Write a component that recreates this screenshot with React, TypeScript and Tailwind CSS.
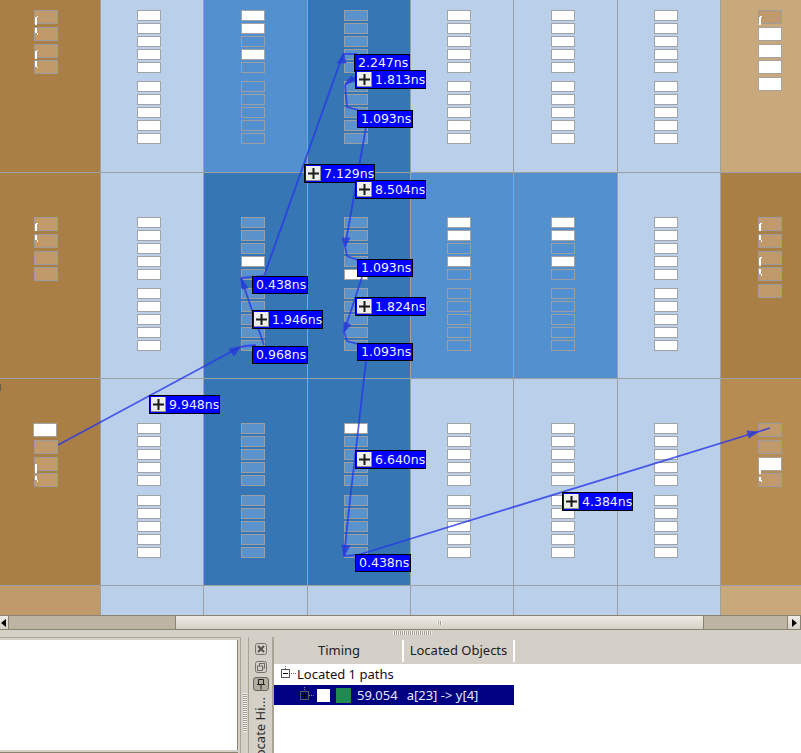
const FONT = "font-['DejaVu_Sans',sans-serif]";

type Tone = "light" | "mid" | "dark";
const toneBg: Record<Tone, string> = { light: "bg-[#bad0ea]", mid: "bg-[#5390cf]", dark: "bg-[#3676b5]" };
const emptyBox: Record<Tone, string> = { light: "bg-white", mid: "bg-[#5390cf]", dark: "bg-[#5a92cb]" };

function Box({ tone, on }: { tone: Tone; on: boolean }) {
  return <div className={`w-[24px] h-[11px] border ${on ? "bg-white border-[#a3a3a3]" : `${emptyBox[tone]} border-[#9c9ea2]`}`} />;
}

function Blue({ tone, top, left, on, gap }: { tone: Tone; top: string; left: string; on: string; gap: string }) {
  const a = on.slice(0, 5).split("");
  const b = on.slice(5).split("");
  return (
    <div className={`${toneBg[tone]} ${top} ${left}`}>
      <div className="flex flex-col gap-[2px]">
        {a.map((c, i) => <Box key={i} tone={tone} on={c === "1"} />)}
      </div>
      <div className={`flex flex-col gap-[2px] ${gap}`}>
        {b.map((c, i) => <Box key={i} tone={tone} on={c === "1"} />)}
      </div>
    </div>
  );
}

function Tile({ on, mt, shift }: { on?: boolean; mt?: string; shift?: string }) {
  return <div className={`w-[24px] h-[14px] border ${mt ?? ""} ${shift ?? ""} ${on ? "bg-white border-[#a3a3a3]" : "bg-[#c09a6b] border-[#9c9c9c]"}`} />;
}

function Brown({ bg, top, left, tiles }: { bg: string; top: string; left: string; tiles: { on?: boolean; shift?: string }[] }) {
  const mts = ["", "mt-[3px]", "mt-[3px]", "mt-[2px]", "mt-[3px]"];
  return (
    <div className={`${bg} ${top} ${left}`}>
      {tiles.map((t, i) => <Tile key={i} on={t.on} mt={mts[i]} shift={t.shift} />)}
    </div>
  );
}

function Row4({ bg }: { bg: string }) {
  return <div className={bg} />;
}

const labels = [
  { t: "2.247ns", p: "left-[354px] top-[54px]" },
  { t: "1.813ns", p: "left-[355px] top-[70px]", icon: true },
  { t: "1.093ns", p: "left-[357px] top-[110px]" },
  { t: "7.129ns", p: "left-[304px] top-[164px]", icon: true },
  { t: "8.504ns", p: "left-[355px] top-[180px]", icon: true },
  { t: "0.438ns", p: "left-[252px] top-[276px]" },
  { t: "1.946ns", p: "left-[252px] top-[310px]", icon: true },
  { t: "0.968ns", p: "left-[252px] top-[346px]" },
  { t: "1.093ns", p: "left-[357px] top-[259px]" },
  { t: "1.824ns", p: "left-[355px] top-[297px]", icon: true },
  { t: "1.093ns", p: "left-[357px] top-[343px]" },
  { t: "9.948ns", p: "left-[149px] top-[395px]", icon: true },
  { t: "6.640ns", p: "left-[355px] top-[450px]", icon: true },
  { t: "0.438ns", p: "left-[355px] top-[554px]" },
  { t: "4.384ns", p: "left-[562px] top-[492px]", icon: true },
];

function Label({ t, p, icon }: { t: string; p: string; icon?: boolean }) {
  return (
    <div className={`absolute ${p} ${icon ? "w-[71px] h-[19px]" : "w-[56px] h-[18px] pl-[3px]"} flex items-center border border-black bg-[#0000ff] text-[12.5px] leading-none text-[#f0f0ff] whitespace-nowrap ${FONT}`}>
      {icon && (
        <span className="w-[15px] h-[15px] ml-[1px] mr-[3px] shrink-0 flex items-center justify-center bg-[#eeeeea] border-r border-b border-[#8d8d8d]">
          <svg width="13" height="13" viewBox="0 0 13 13">
            <path d="M5.5 1h2v4.5H12v2H7.5V12h-2V7.5H1v-2h4.5z" fill="#1a1a1a" />
          </svg>
        </span>
      )}
      <span className="pt-[1px]">{t}</span>
    </div>
  );
}

function Overlay() {
  const lines = [
    "M58 445 L240 347",
    "M240 347 L246 346 L256 345",
    "M264 345 L241 278",
    "M241 278 L264 276 L343 54",
    "M343 54 L357 54",
    "M362 72 L345 85",
    "M345 85 L347 107 L358 110",
    "M366 127 L345 247",
    "M345 247 L347 256 L358 260",
    "M362 277 L344 332",
    "M344 332 L347 341 L358 344",
    "M366 361 L357 440 L350 500 L344 556",
    "M344 556 L358 555",
    "M358 555 L770 428",
  ];
  const heads = [
    "M240 347 L229 349 L234 356 Z",
    "M241 278 L248 288 L242 289 Z",
    "M344 54 L337 63 L346 63 Z",
    "M345 84 L351 76 L356 81 Z",
    "M342 238 L350 238 L345 247 Z",
    "M344 322 L351 325 L344 332 Z",
    "M342 545 L350 546 L344 556 Z",
    "M747 431 L758 432 L749 438 Z",
  ];
  const whites: [number, number, number, number][] = [
    [35, 17, 2, 8], [37, 16, 1, 1], [35, 28, 2, 5], [37, 33, 1, 2],
    [35, 51, 2, 8], [37, 50, 1, 1], [35, 61, 2, 6], [37, 67, 1, 1],
    [35, 224, 2, 7], [36, 223, 2, 1], [35, 235, 2, 5], [37, 240, 1, 2],
    [35, 464, 2, 9], [35, 476, 2, 4], [37, 480, 1, 2],
    [759, 17, 2, 8], [760, 16, 2, 1],
    [759, 224, 2, 7], [760, 223, 2, 1], [759, 235, 2, 5], [761, 240, 1, 2],
    [759, 258, 2, 8], [760, 257, 2, 1], [759, 269, 2, 5], [761, 274, 1, 2],
    [759, 470, 2, 4], [759, 477, 2, 4], [761, 480, 1, 2],
  ];
  return (
    <svg className="absolute left-0 top-0" width="801" height="615" viewBox="0 0 801 615">
      {whites.map(([x, y, w, h], i) => <rect key={i} x={x} y={y} width={w} height={h} fill="#ffffff" />)}
      <rect x="0" y="384" width="1" height="7" fill="#6a5d48" />
      {lines.map((d, i) => <path key={i} d={d} fill="none" stroke="#2536ea" strokeOpacity="0.78" strokeWidth="1.8" />)}
      {heads.map((d, i) => <path key={i} d={d} fill="#2536d8" fillOpacity="0.72" stroke="#2536ea" strokeOpacity="0.8" strokeWidth="0.8" />)}
    </svg>
  );
}

function ScrollButton({ dir }: { dir: "l" | "r" }) {
  return (
    <div className={`h-full flex items-center justify-center bg-gradient-to-b from-[#efece5] to-[#d5d1c7] ${dir === "l" ? "w-[9px] border-r border-[#8a8372]" : "w-[14px] border-x border-[#8a8372]"}`}>
      <svg width="6" height="8" viewBox="0 0 6 8">
        <path d={dir === "l" ? "M5 0v8L0 4z" : "M1 0v8l5-4z"} fill="#000" />
      </svg>
    </div>
  );
}

function Stripes({ n, vertical }: { n: number; vertical?: boolean }) {
  return (
    <div className={`flex bg-[#a09c92] ${vertical ? "flex-col gap-[1px]" : "gap-[1px]"}`}>
      {Array.from({ length: n }).map((_, i) => (
        <div key={i} className={vertical ? "w-[4px] h-[1px] bg-[#f4f3ee]" : "w-[1px] h-[4px] bg-[#f4f3ee]"} />
      ))}
    </div>
  );
}

export default function App() {
  const whiteAll = "1111111111";
  const t = { on: true };
  const e = {};
  return (
    <div className={`relative w-[801px] h-[753px] overflow-hidden flex flex-col bg-[#d4d0c8] ${FONT}`}>
      <div className="relative h-[615px] shrink-0">
        <div className="grid grid-cols-[100px_102px_103px_102px_102px_103px_102px_80px] grid-rows-[172px_205px_206px_29px] gap-px h-full bg-[#9da0a3]">
          <Brown bg="bg-[#a97f45]" top="pt-[10px]" left="pl-[34px]" tiles={[e, e, e, e]} />
          <Blue tone="light" top="pt-[10px]" left="pl-[36px]" on={whiteAll} gap="mt-[8px]" />
          <Blue tone="mid" top="pt-[10px]" left="pl-[37px]" on="1101000000" gap="mt-[8px]" />
          <Blue tone="dark" top="pt-[10px]" left="pl-[36px]" on="0000000000" gap="mt-[8px]" />
          <Blue tone="light" top="pt-[10px]" left="pl-[36px]" on={whiteAll} gap="mt-[8px]" />
          <Blue tone="light" top="pt-[10px]" left="pl-[37px]" on={whiteAll} gap="mt-[8px]" />
          <Blue tone="light" top="pt-[10px]" left="pl-[36px]" on={whiteAll} gap="mt-[8px]" />
          <Brown bg="bg-[#c9a87c]" top="pt-[10px]" left="pl-[37px]" tiles={[e, t, t, t, t]} />

          <Brown bg="bg-[#a97f45]" top="pt-[44px]" left="pl-[34px]" tiles={[e, e, e, e]} />
          <Blue tone="light" top="pt-[44px]" left="pl-[36px]" on={whiteAll} gap="mt-[8px]" />
          <Blue tone="dark" top="pt-[44px]" left="pl-[37px]" on="0001000000" gap="mt-[8px]" />
          <Blue tone="dark" top="pt-[44px]" left="pl-[36px]" on="0000100000" gap="mt-[8px]" />
          <Blue tone="mid" top="pt-[44px]" left="pl-[36px]" on="1101000000" gap="mt-[8px]" />
          <Blue tone="mid" top="pt-[44px]" left="pl-[37px]" on="1101000000" gap="mt-[8px]" />
          <Blue tone="light" top="pt-[44px]" left="pl-[36px]" on={whiteAll} gap="mt-[8px]" />
          <Brown bg="bg-[#a97f45]" top="pt-[44px]" left="pl-[37px]" tiles={[e, e, e, e, e]} />

          <Brown bg="bg-[#a97f45]" top="pt-[44px]" left="pl-[34px]" tiles={[{ on: true, shift: "-ml-[1px]" }, e, e, e]} />
          <Blue tone="light" top="pt-[44px]" left="pl-[36px]" on={whiteAll} gap="mt-[9px]" />
          <Blue tone="dark" top="pt-[44px]" left="pl-[37px]" on="0000000000" gap="mt-[9px]" />
          <Blue tone="dark" top="pt-[44px]" left="pl-[36px]" on="1000000000" gap="mt-[9px]" />
          <Blue tone="light" top="pt-[44px]" left="pl-[36px]" on={whiteAll} gap="mt-[9px]" />
          <Blue tone="light" top="pt-[44px]" left="pl-[37px]" on={whiteAll} gap="mt-[9px]" />
          <Blue tone="light" top="pt-[44px]" left="pl-[36px]" on={whiteAll} gap="mt-[9px]" />
          <Brown bg="bg-[#b78c52]" top="pt-[44px]" left="pl-[37px]" tiles={[e, e, t, e]} />

          <Row4 bg="bg-[#c09a6b]" />
          <Row4 bg="bg-[#bad0ea]" />
          <Row4 bg="bg-[#bad0ea]" />
          <Row4 bg="bg-[#bad0ea]" />
          <Row4 bg="bg-[#bad0ea]" />
          <Row4 bg="bg-[#bad0ea]" />
          <Row4 bg="bg-[#bad0ea]" />
          <Row4 bg="bg-[#c9a87c]" />
        </div>
        <Overlay />
        {labels.map((l, i) => <Label key={i} {...l} />)}
      </div>

      <div className="h-[15px] shrink-0 flex border-y border-[#8a8372]">
        <ScrollButton dir="l" />
        <div className="w-[166px] bg-[#bdb5a1]" />
        <div className="w-[529px] flex items-center justify-center bg-gradient-to-b from-[#efece5] to-[#d5d1c7] border-x border-[#8a8372]">
          <Stripes n={3} />
        </div>
        <div className="w-[83px] bg-[#bdb5a1]" />
        <ScrollButton dir="r" />
      </div>

      <div className="h-[7px] shrink-0 pl-[393px] pt-[1px]">
        <div className="flex"><Stripes n={20} /></div>
      </div>

      <div className="flex-1 flex min-h-0">
        <div className="w-[241px] shrink-0 border-t border-r border-[#a9a496] pr-[2px] pt-[2px] flex flex-col">
          <div className="h-[110px] bg-white border-r border-[#8a8372]" />
          <div className="mt-[2px] flex-1 bg-[#e6e3da] border-t border-[#8a8372]" />
        </div>
        <div className="w-[7px] shrink-0 flex items-start pl-[2px] pt-[56px]">
          <Stripes n={20} vertical />
        </div>
        <div className="w-[24px] shrink-0 border-l border-[#a9a496] flex flex-col items-center overflow-hidden pt-[6px] relative">
          <svg width="12" height="12" viewBox="0 0 12 12" className="shrink-0">
            <rect x="0.5" y="0.5" width="11" height="11" rx="2" fill="#d4d0c8" stroke="#77736b" />
            <path d="M3 3l6 6M9 3l-6 6" stroke="#55524c" strokeWidth="2" />
          </svg>
          <svg width="12" height="12" viewBox="0 0 12 12" className="shrink-0 mt-[6px]">
            <rect x="0.5" y="0.5" width="11" height="11" rx="2" fill="#d4d0c8" stroke="#77736b" />
            <rect x="4.5" y="2.5" width="5" height="4.5" fill="none" stroke="#6c6961" />
            <rect x="2.5" y="5" width="5" height="4.5" fill="#d4d0c8" stroke="#6c6961" />
          </svg>
          <div className="shrink-0 mt-[4px] w-[16px] h-[14px] rounded-[3px] border border-[#6a665e] bg-[#b2ac9e] flex items-center justify-center">
            <svg width="10" height="11" viewBox="0 0 10 11">
              <path d="M2.5 0.5h5v5h-5zM1 5.5h8M5 5.5v5" fill="none" stroke="#222" />
            </svg>
          </div>
          <div className="shrink-0 mt-[6px] [writing-mode:vertical-rl] rotate-180 text-[13px] leading-[13px] text-[#2c2a26] whitespace-nowrap font-['Noto_Sans',sans-serif]">
            Locate Hi...
          </div>
        </div>
        <div className="flex-1 flex flex-col border-l-2 border-[#a9a496] font-['Noto_Sans',sans-serif] text-[13px]">
          <div className="h-[27px] shrink-0 flex items-center text-[#20201c]">
            <div className="w-[130px] h-[22px] pl-[2px] pt-[1px] flex items-center justify-center border-r-2 border-white">Timing</div>
            <div className="w-[111px] h-[22px] pt-[1px] flex items-center justify-center border-r-2 border-white whitespace-nowrap">Located Objects</div>
          </div>
          <div className="flex-1 bg-white">
            <div className="w-[240px]">
              <div className="h-[21px] pt-[1px] flex items-center pl-[7px] text-[#111] whitespace-nowrap">
                <svg width="16" height="16" viewBox="0 0 16 16" className="shrink-0 -mt-[2px]">
                  <path d="M4.5 0v3M10 7.5h5" stroke="#666" strokeDasharray="1 1" fill="none" />
                  <rect x="0.5" y="3.5" width="8" height="8" fill="#fff" stroke="#555" />
                  <path d="M2 7.5h5" stroke="#000" />
                </svg>
                <span>Located 1 paths</span>
              </div>
              <div className="h-[20px] pt-[1px] flex items-center bg-[#000080] text-[#e4e8ff] whitespace-nowrap pl-[26px]">
                <svg width="16" height="16" viewBox="0 0 16 16" className="shrink-0 -mt-[1px]">
                  <path d="M4.5 0v4M9 8.5h5" stroke="#8888b0" strokeDasharray="1 1" fill="none" />
                  <rect x="0.5" y="4.5" width="8" height="8" fill="none" stroke="#55556a" />
                  <path d="M2 8.5h5M4.5 6v5" stroke="#000" />
                </svg>
                <span className="w-[13px] h-[13px] bg-white ml-[1px] -mt-[1px] shrink-0" />
                <span className="w-[15px] h-[15px] bg-[#1f8a4d] ml-[6px] -mt-[1px] shrink-0" />
                <span className="ml-[6px]">59.054</span>
                <span className="ml-[9px]">a[23] -&gt; y[4]</span>
              </div>
            </div>
          </div>
        </div>
      </div>
    </div>
  );
}
